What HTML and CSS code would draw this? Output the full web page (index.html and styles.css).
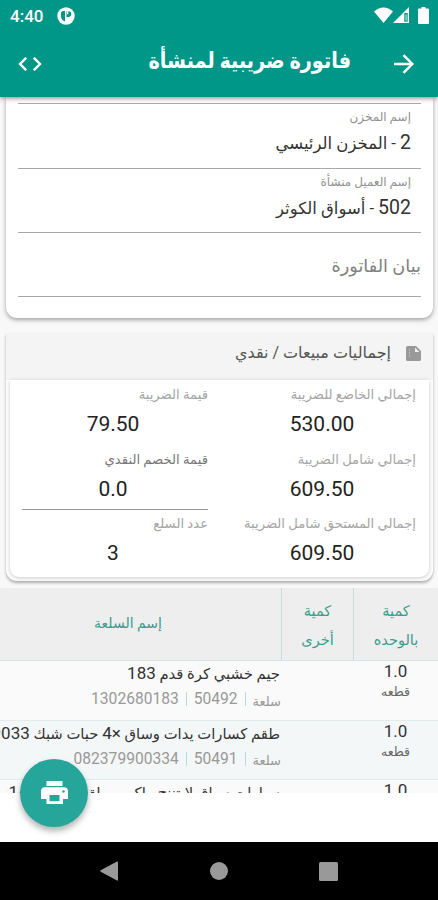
FILE: index.html
```
<!DOCTYPE html>
<html lang="ar" dir="rtl">
<head>
  <meta charset="UTF-8" />
  <meta name="viewport" content="width=device-width, initial-scale=1.0"/>
  <title>فاتورة ضريبية لمنشأة</title>
  <link rel="stylesheet" href="styles.css">
</head>
<body>

  <!-- Header -->
  <header class="header">
    <div class="status-bar">
      <div class="status-left">
        <span class="time">4:40</span>
        <svg width="18" height="18" viewBox="0 0 18 18"><circle cx="9" cy="9" r="8.7" fill="#fff"/><path d="M5.500 4H8v10.500Q4 13 4 9V5.500zM9.500 4.300h2a2.800 2.800 0 0 1 0 5.600h-2z" fill="#009688"/><path d="M10 4h1.300v3.300H10z" fill="#fff"/></svg>
      </div>
      <div class="status-right">
        <svg width="19" height="17" viewBox="0 0 19 17"><path d="M0 4.500Q9.500-3.500 19 4.500L9.500 16z" fill="#fff"/></svg>
        <svg width="17" height="17" viewBox="0 0 17 17"><path d="M16 0v16H0z" fill="#fff"/><path d="M11.300 6h3.400v8.700h-3.400z" fill="#009688"/><path d="M12.500 7.500h1.200v6h-1.200z" fill="#b9e2dd"/></svg>
        <svg class="battery" width="11" height="17" viewBox="0 0 11 17"><path d="M3.500 0h4v1.500H10q1 0 1 1V16q0 1-1 1H1q-1 0-1-1V2.500q0-1 1-1h2.500z" fill="#fff"/></svg>
      </div>
    </div>
    <div class="app-bar">
      <svg width="20" height="20" viewBox="0 0 20 20" fill="none" stroke="#fff" stroke-width="2.400"><path d="M0 10h18M9.500 1.200l8.800 8.800-8.800 8.800"/></svg>
      <h1>فاتورة ضريبية لمنشأة</h1>
      <svg width="24" height="14" viewBox="0 0 24 14" fill="none" stroke="#fff" stroke-width="2.400"><path d="M8.200.8L2 7l6.200 6.200M15.800.8L22 7l-6.200 6.200"/></svg>
    </div>
  </header>

  <!-- Invoice -->
  <main class="content">
    <section class="card info-card">
      <div class="field tail"></div>
      <div class="field">
        <label>إسم المخزن</label>
        <p><span class="num">2</span> - المخزن الرئيسي</p>
      </div>
      <div class="field">
        <label>إسم العميل منشأة</label>
        <p><span class="num">502</span> - أسواق الكوثر</p>
      </div>
      <div class="field note">بيان الفاتورة</div>
    </section>

    <section class="card totals-card">
      <div class="totals-title">
        <svg width="15" height="15" viewBox="0 0 15 15"><path d="M1.500 0H10l5 5v8.500q0 1.500-1.500 1.500h-12Q0 15 0 13.500v-12Q0 0 1.500 0z" fill="#999"/><path d="M9 1.500V6h4.500z" fill="#eee"/><path d="M3.500 3v9" stroke="#bbb" stroke-dasharray="2 1"/></svg>
        <h2>إجماليات مبيعات / نقدي</h2>
      </div>
      <div class="totals">
        <div class="total"><label>إجمالي الخاضع للضريبة</label><b>530.00</b></div>
        <div class="total"><label>قيمة الضريبة</label><b>79.50</b></div>
        <div class="total"><label>إجمالي شامل الضريبة</label><b>609.50</b></div>
        <div class="total editable"><label>قيمة الخصم النقدي</label><b>0.0</b></div>
        <div class="total"><label>إجمالي المستحق شامل الضريبة</label><b>609.50</b></div>
        <div class="total"><label>عدد السلع</label><b>3</b></div>
      </div>
    </section>

    <section class="items">
      <div class="row items-head">
        <div>كمية<br>بالوحده</div>
        <div>كمية<br>أخرى</div>
        <div>إسم السلعة</div>
      </div>
      <div class="row item">
        <div class="qty"><b>1.0</b><span>قطعه</span></div>
        <div class="name">
          <p>جيم خشبي كرة قدم <span class="num">183</span></p>
          <div class="codes"><span>سلعة</span><i></i><b>50492</b><i></i><b>1302680183</b></div>
        </div>
      </div>
      <div class="row item alt">
        <div class="qty"><b>1.0</b><span>قطعه</span></div>
        <div class="name">
          <p>طقم كسارات يدات وساق <span class="num">×4</span> حبات شبك <span class="num">9033</span></p>
          <div class="codes"><span>سلعة</span><i></i><b>50491</b><i></i><b>082379900334</b></div>
        </div>
      </div>
      <div class="row item">
        <div class="qty"><b>1.0</b></div>
        <div class="name">
          <p>سيارات سباق لايتننج ماكوين طقم ألعاب <span class="num">142</span></p>
        </div>
      </div>
    </section>
  </main>

  <button class="fab" aria-label="طباعة">
    <svg width="27" height="24" viewBox="0 0 27 24"><path d="M5.500 0h16v5h-16zM4 6.300h19q4 0 4 4V18h-5v5H5.500v-5H0v-7.700q0-4 4-4z" fill="#fff"/><path d="M8.500 14h10v6.200h-10z" fill="#26a69a"/><circle cx="22.500" cy="10.500" r="1.300" fill="#26a69a"/></svg>
  </button>

  <!-- Navigation bar -->
  <nav class="nav-bar">
    <svg width="18" height="20" viewBox="0 0 18 20"><path d="M17 .5q1-.5 1 1v17q0 1.500-1 1L.7 10.700q-1-.7 0-1.400z"/></svg>
    <svg width="18" height="18" viewBox="0 0 18 18"><circle cx="9" cy="9" r="9"/></svg>
    <svg width="19" height="19" viewBox="0 0 19 19"><rect width="19" height="19" rx="1.500"/></svg>
  </nav>

</body>
</html>
```
FILE: styles.css
```
* { margin: 0; padding: 0; box-sizing: border-box; }
body {
  height: 900px;
  display: flex;
  flex-direction: column;
  background-color: #fff;
  font-family: Roboto, "DejaVu Sans", sans-serif;
  color: #333;
  overflow: hidden;
}

svg { display: block; flex: none; }
b { font-weight: normal; }

.header {
  height: 97px;
  flex: none;
  background-color: #009688;
  color: white;
  box-shadow: 0 1px 5px rgba(0, 0, 0, 0.5);
  z-index: 2;
}

.status-bar {
  height: 31px;
  display: flex;
  justify-content: space-between;
  align-items: center;
  padding: 0 10px;
  direction: ltr;
}

.status-left, .status-right {
  display: flex;
  align-items: center;
}

.time {
  font-size: 17px;
  font-weight: 500;
  width: 47px;
}

.status-right { margin-right: -1px; }
.status-right .battery { margin-left: 8px; }

.app-bar {
  height: 66px;
  display: flex;
  align-items: center;
  padding: 0 24px 0 18px;
}

.app-bar h1 {
  flex: 1;
  font-size: 22px;
  font-weight: bold;
  line-height: 30px;
  margin-right: 43px;
  padding-bottom: 6px;
  white-space: nowrap;
  transform: scaleX(0.875);
  transform-origin: right;
}

.content {
  height: 696px;
  flex: none;
  overflow: hidden;
  background-color: #f8f8f8;
}

.card {
  width: 427px;
  margin: 0 5px 0 6px;
  background-color: #fff;
  box-shadow: 0 2px 4px rgba(0, 0, 0, 0.35);
}

.info-card {
  height: 221px;
  padding: 0 12px;
  border-radius: 0 0 11px 11px;
}

.field {
  height: 64.5px;
  border-bottom: 1px solid #aaa;
  padding: 4px 10px 0;
}

.field.tail { height: 7px; }

.field label {
  display: block;
  font-size: 12px;
  line-height: 18px;
  color: #929292;
}

.field p {
  font-size: 16.5px;
  line-height: 30px;
  margin-top: 2px;
}

.field .num { font-size: 19.5px; }

.field.note {
  height: 64px;
  padding: 18px 0 0;
  font-size: 17.7px;
  line-height: 30px;
  color: #808080;
}

.totals-card {
  height: 248px;
  margin-top: 15px;
  padding-bottom: 4px;
  border-radius: 0 0 11px 11px;
  box-shadow: 0 2px 3px rgba(0, 0, 0, 0.3);
}

.totals-title {
  height: 47px;
  display: flex;
  align-items: center;
  gap: 15px;
  padding: 0 12px 6px;
  background-color: #f4f4f4;
}

.totals-title h2 {
  font-size: 16px;
  font-weight: normal;
  line-height: 22px;
  padding-bottom: 1px;
  color: #555;
}

.totals {
  height: 197px;
  margin: 0 4px;
  padding: 1px 13px 0;
  display: grid;
  grid-template-columns: 188px 186px;
  grid-auto-rows: 64.5px;
  column-gap: 20px;
  border-radius: 0 0 9px 9px;
  box-shadow: 0 1px 4px rgba(0, 0, 0, 0.22);
}

.total label {
  display: block;
  font-size: 13.2px;
  line-height: 27px;
  color: #a5a5a5;
  white-space: nowrap;
}

.total b {
  display: block;
  font-size: 21px;
  line-height: 32px;
  text-align: center;
  color: #222;
}

.total:nth-child(even) b { padding-right: 4px; }

.total.editable { border-bottom: 1px solid #999; height: 64px; }
.total.editable label { color: #777; }

.items { margin-top: 7px; }

.row {
  display: grid;
  grid-template-columns: 85px 72px 281px;
}

.items-head {
  height: 73px;
  background-color: #eee;
  border-bottom: 1px solid #cfe6e2;
  color: #3a9c8c;
  font-size: 14.5px;
  line-height: 29px;
  text-align: center;
  align-items: stretch;
}

.items-head div {
  display: grid;
  align-content: center;
  border-left: 1px solid #c3e0dc;
  padding-top: 3px;
}

.items-head div:last-child {
  border-left: none;
  padding: 0 25px 2px 0;
  font-size: 14px;
}

.item {
  height: 59.5px;
  background-color: #fafafa;
  border-bottom: 1px solid #e2ecea;
}

.item.alt { background-color: #f4f7f7; }

.qty {
  display: flex;
  flex-direction: column;
  align-items: center;
}

.qty b { font-size: 17px; line-height: 20px; }
.qty span { font-size: 12.5px; line-height: 22px; color: #666; }

.name {
  grid-column: 3;
  overflow: hidden;
  white-space: nowrap;
}

.name p { font-size: 14.8px; line-height: 25px; padding-right: 1px; }
.name .num { font-size: 17px; }

.codes {
  display: flex;
  align-items: center;
  gap: 7px;
  height: 24px;
  font-size: 13px;
  color: #999;
  line-height: 24px;
}

.codes span { padding-top: 5px; }
.codes b { font-size: 15.6px; }
.codes i { width: 1px; height: 14px; background-color: #b5dcd6; }

.fab {
  position: absolute;
  left: 20px;
  top: 759px;
  width: 68px;
  height: 68px;
  display: flex;
  align-items: center;
  justify-content: center;
  border: none;
  border-radius: 50%;
  background-color: #26a69a;
  box-shadow: 0 4px 6px rgba(0, 0, 0, 0.3);
  cursor: pointer;
}

.nav-bar {
  height: 58px;
  margin-top: auto;
  display: flex;
  align-items: center;
  justify-content: space-between;
  padding: 0 100px;
  background-color: #000;
  direction: ltr;
}

.nav-bar svg { fill: #999; }
```
